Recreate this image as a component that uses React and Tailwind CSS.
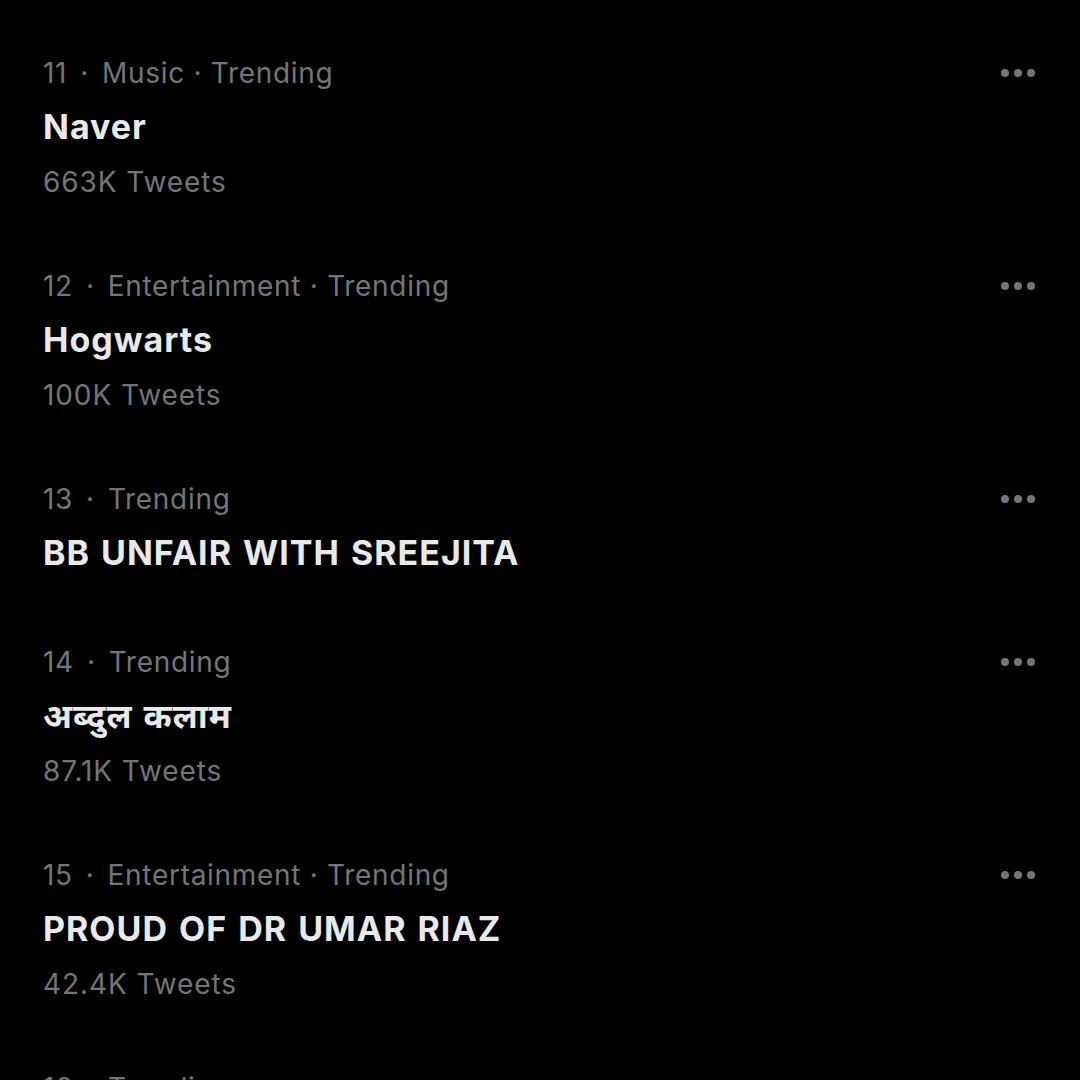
const trends = [
  { rank: 11, category: "Music", title: "Naver", count: "663K Tweets" },
  { rank: 12, category: "Entertainment", title: "Hogwarts", count: "100K Tweets" },
  { rank: 13, category: null, title: "BB UNFAIR WITH SREEJITA", count: null },
  { rank: 14, category: null, title: "अब्दुल कलाम", count: "87.1K Tweets" },
  { rank: 15, category: "Entertainment", title: "PROUD OF DR UMAR RIAZ", count: "42.4K Tweets" },
  { rank: 16, category: null, title: "#", count: null },
];

function MoreButton() {
  return (
    <div className="flex items-center gap-[5px] h-[48px]">
      <span className="block size-[8px] rounded-full bg-[#71767b]" />
      <span className="block size-[8px] rounded-full bg-[#71767b]" />
      <span className="block size-[8px] rounded-full bg-[#71767b]" />
    </div>
  );
}

function TrendRow({ trend }) {
  return (
    <div className="flex justify-between pl-[43px] pr-[45px] pt-[27px] pb-[28px]">
      <div className="flex flex-col">
        {/* meta line */}
        <div className="flex items-center h-[48px] text-[28px] tracking-[0.7px] text-[#71767b]">
          <span>{trend.rank}</span>
          <span className="px-[13px]">·</span>
          <span>
            {trend.category ? `${trend.category} · Trending` : "Trending"}
          </span>
        </div>
        <div className="flex items-center h-[60px] pb-[2px] text-[34px] tracking-[1px] [word-spacing:2px] font-bold text-[#e7e9ea]">
          {trend.title}
        </div>
        {trend.count && (
          <div className="flex items-center h-[50px] text-[28px] tracking-[0.9px] text-[#71767b]">
            {trend.count}
          </div>
        )}
      </div>
      <MoreButton />
    </div>
  );
}

export default function App() {
  return (
    <div
      className="w-[1080px] h-[1080px] overflow-hidden bg-black pt-[22px]"
      style={{ fontFamily: "Inter, 'Noto Sans', 'DejaVu Sans', sans-serif" }}
    >
      {trends.map((t) => (
        <TrendRow key={t.rank} trend={t} />
      ))}
    </div>
  );
}
